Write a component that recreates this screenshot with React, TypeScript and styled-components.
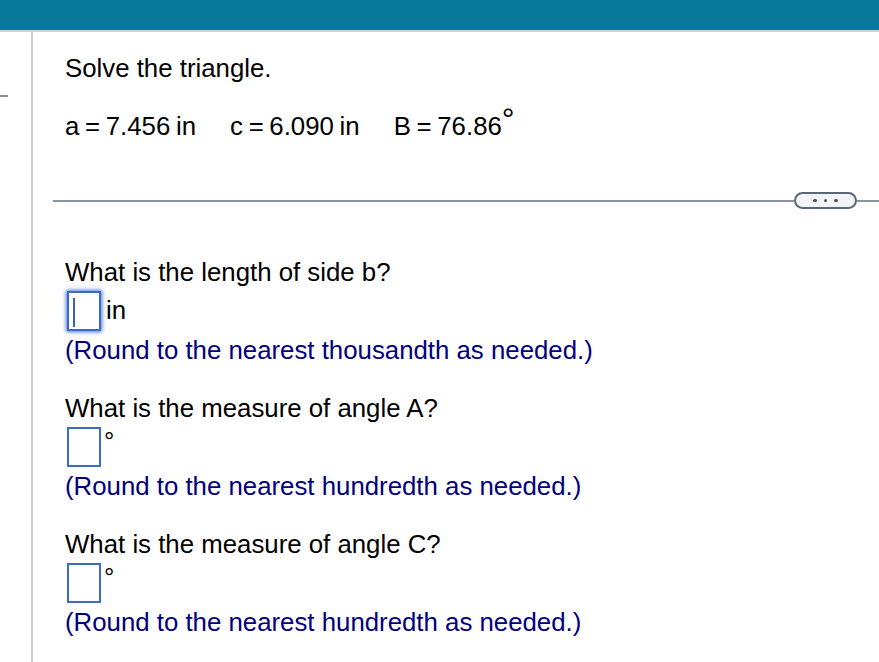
import React from "react";
import styled, { createGlobalStyle } from "styled-components";

const Global = createGlobalStyle`
  html, body {
    margin: 0;
    padding: 0;
    background: #ffffff;
  }
  body {
    font-family: "Liberation Sans", Arial, Helvetica, sans-serif;
  }
`;

const Page = styled.div`
  min-height: 100vh;
  display: flex;
  flex-direction: column;
  overflow: hidden;
`;

const TopBar = styled.div`
  height: 30px;
  background: #08799b;
  border-bottom: 2px solid #cad2dc;
  flex-shrink: 0;
`;

const Body = styled.div`
  flex: 1;
  display: flex;
`;

const Gutter = styled.div`
  width: 31px;
  flex-shrink: 0;
`;

const Dash = styled.div`
  width: 8px;
  height: 2px;
  margin-top: 63px;
  background: #8b8b8b;
`;

const Panel = styled.div`
  flex: 1;
  border-left: 2px solid #caccd9;
  padding-top: 21px;
  min-width: 0;
`;

const Section = styled.div`
  padding-left: 32px;
`;

const Line = styled.div<{ $navy?: boolean; $gap?: number }>`
  font-size: 25.8px;
  line-height: 30px;
  color: ${(p) => (p.$navy ? "#000080" : "#000000")};
  margin-top: ${(p) => p.$gap ?? 0}px;
  white-space: nowrap;
`;

const Givens = styled.div`
  display: flex;
  gap: 34px;
  margin-top: 28px;
  font-size: 25.8px;
  line-height: 30px;
  color: #000;
  white-space: nowrap;
  word-spacing: -1.5px;
`;

const BigDegree = styled.span`
  font-size: 32px;
  vertical-align: 5px;
  margin-left: 0;
  line-height: 0;
`;

const DividerRow = styled.div`
  display: flex;
  align-items: center;
  height: 17px;
  margin-top: 51px;
  margin-left: 20px;
`;

const Rule = styled.div<{ $w?: number }>`
  height: 2px;
  background: #8a92a1;
  ${(p) => (p.$w ? `width: ${p.$w}px; flex-shrink: 0;` : "flex: 1;")}
`;

const Pill = styled.div`
  box-sizing: border-box;
  width: 63px;
  height: 17px;
  border: 2px solid #5c6774;
  border-radius: 9px;
  background: #f3f4f6;
  display: flex;
  align-items: center;
  justify-content: center;
  gap: 7px;
  flex-shrink: 0;
`;

const Dot = styled.span`
  width: 3.5px;
  height: 3.5px;
  border-radius: 50%;
  background: #4a525e;
`;

const Questions = styled(Section)`
  margin-top: 48px;
`;

const Block = styled.div<{ $first?: boolean }>`
  margin-top: ${(p) => (p.$first ? 0 : 28)}px;
`;

const AnswerRow = styled.div<{ $gap: number }>`
  display: flex;
  align-items: flex-start;
  gap: ${(p) => p.$gap}px;
  margin-top: 4px;
  padding-left: 2px;
`;

const Box = styled.div<{ $focused?: boolean }>`
  box-sizing: border-box;
  width: 34px;
  height: 40px;
  border: 2px solid #3a6bc9;
  background: #fff;
  padding: 5px 0 0 4px;
  box-shadow: ${(p) =>
    p.$focused ? "0 0 4px 1px rgba(45, 95, 215, 0.85)" : "none"};
`;

const Caret = styled.div`
  width: 2px;
  height: 29px;
  background: #3a5fcf;
`;

const Unit = styled.span<{ $offset: number }>`
  font-size: 25.8px;
  line-height: 30px;
  color: #000;
  margin-top: ${(p) => p.$offset}px;
`;

type Q = {
  question: string;
  unit: string;
  hint: string;
  focused?: boolean;
};

const questions: Q[] = [
  {
    question: "What is the length of side b?",
    unit: "in",
    hint: "(Round to the nearest thousandth as needed.)",
    focused: true,
  },
  {
    question: "What is the measure of angle A?",
    unit: "°",
    hint: "(Round to the nearest hundredth as needed.)",
  },
  {
    question: "What is the measure of angle C?",
    unit: "°",
    hint: "(Round to the nearest hundredth as needed.)",
  },
];

export default function App() {
  return (
    <Page>
      <Global />
      <TopBar />
      <Body>
        <Gutter>
          <Dash />
        </Gutter>
        <Panel>
          <Section>
            <Line>Solve the triangle.</Line>
            <Givens>
              <span>a = 7.456 in</span>
              <span>c = 6.090 in</span>
              <span>
                B = 76.86<BigDegree>°</BigDegree>
              </span>
            </Givens>
          </Section>
          <DividerRow>
            <Rule />
            <Pill>
              <Dot />
              <Dot />
              <Dot />
            </Pill>
            <Rule $w={22} />
          </DividerRow>
          <Questions>
            {questions.map((q, i) => (
              <Block key={i} $first={i === 0}>
                <Line>{q.question}</Line>
                <AnswerRow $gap={q.unit === "in" ? 5 : 3}>
                  <Box $focused={q.focused}>{q.focused && <Caret />}</Box>
                  <Unit $offset={q.unit === "in" ? 4 : -1}>{q.unit}</Unit>
                </AnswerRow>
                <Line $navy $gap={4}>
                  {q.hint}
                </Line>
              </Block>
            ))}
          </Questions>
        </Panel>
      </Body>
    </Page>
  );
}
